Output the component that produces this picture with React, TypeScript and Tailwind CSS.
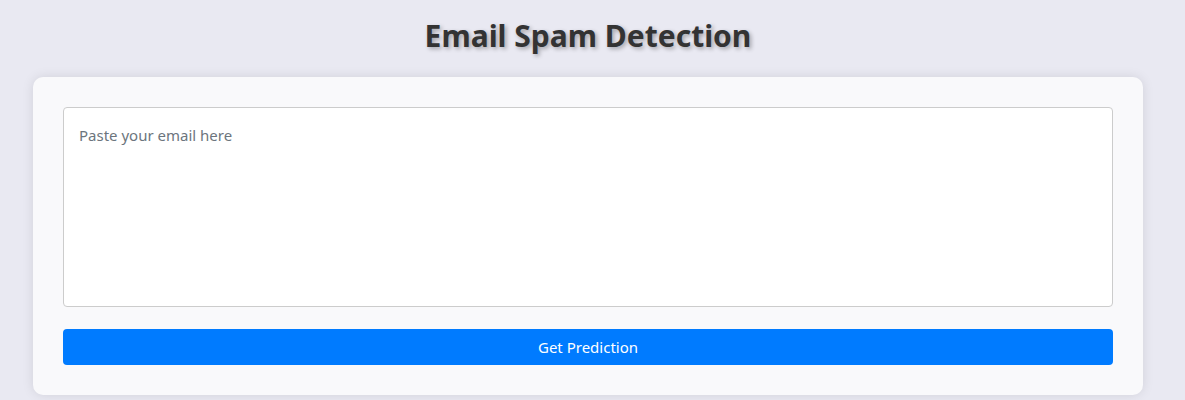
export default function App() {
  return (
    <div className="min-h-[400px] bg-[#e9e9f2] font-['Noto_Sans',sans-serif]">
      <div className="w-[1176px] flex flex-col items-center">
        <h1 className="mt-[14px] mb-[19px] text-[30px] leading-[44px] font-bold text-[#333] [text-shadow:2px_2px_4px_rgba(0,0,0,0.3)]">
          Email Spam Detection
        </h1>
        <div className="w-[1110px] rounded-[10px] bg-[#f9f9fb] p-[30px] shadow-[0_0_12px_rgba(0,0,0,0.1)]">
          <textarea
            placeholder="Paste your email here"
            className="block w-full h-[200px] resize-none rounded-[4px] border border-[#ccc] bg-white px-[15px] py-[16px] text-[15px] leading-[22px] text-[#333] placeholder:text-[#6c757d] outline-none"
          />
          <button className="mt-[22px] block w-full h-[36px] rounded-[4px] bg-[#007bff] text-[15px] text-white">
            Get Prediction
          </button>
        </div>
      </div>
    </div>
  );
}
